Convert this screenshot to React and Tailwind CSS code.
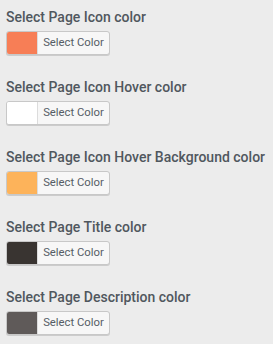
const fields = [
  { label: 'Select Page Icon color', color: '#f77e56' },
  { label: 'Select Page Icon Hover color', color: '#ffffff' },
  { label: 'Select Page Icon Hover Background color', color: '#fdb35a' },
  { label: 'Select Page Title color', color: '#393431' },
  { label: 'Select Page Description color', color: '#5f5a59' },
]

export default function App() {
  return (
    <div
      className="min-h-[344px] w-[273px] bg-[#ececec] pl-[6px] pt-[7px]"
      style={{ fontFamily: 'Roboto, "Liberation Sans", sans-serif' }}
    >
      {fields.map((f) => (
        <div key={f.label} className="mb-[22px]">
          <h3 className="text-[14px] font-medium leading-[20px] text-[#50575e]">{f.label}</h3>
          <button
            type="button"
            className="mt-[4px] flex h-[24px] w-[104px] overflow-hidden rounded-[3px] border border-[#c8c8c8] bg-[#f7f7f7] shadow-[0_1px_0_#ccc]"
          >
            <span className="h-full w-[31px] border-r border-[#dcdcdc]" style={{ background: f.color }} />
            <span className="flex-1 text-center text-[11.3px] leading-[22px] text-[#555d66]">Select Color</span>
          </button>
        </div>
      ))}
    </div>
  )
}
